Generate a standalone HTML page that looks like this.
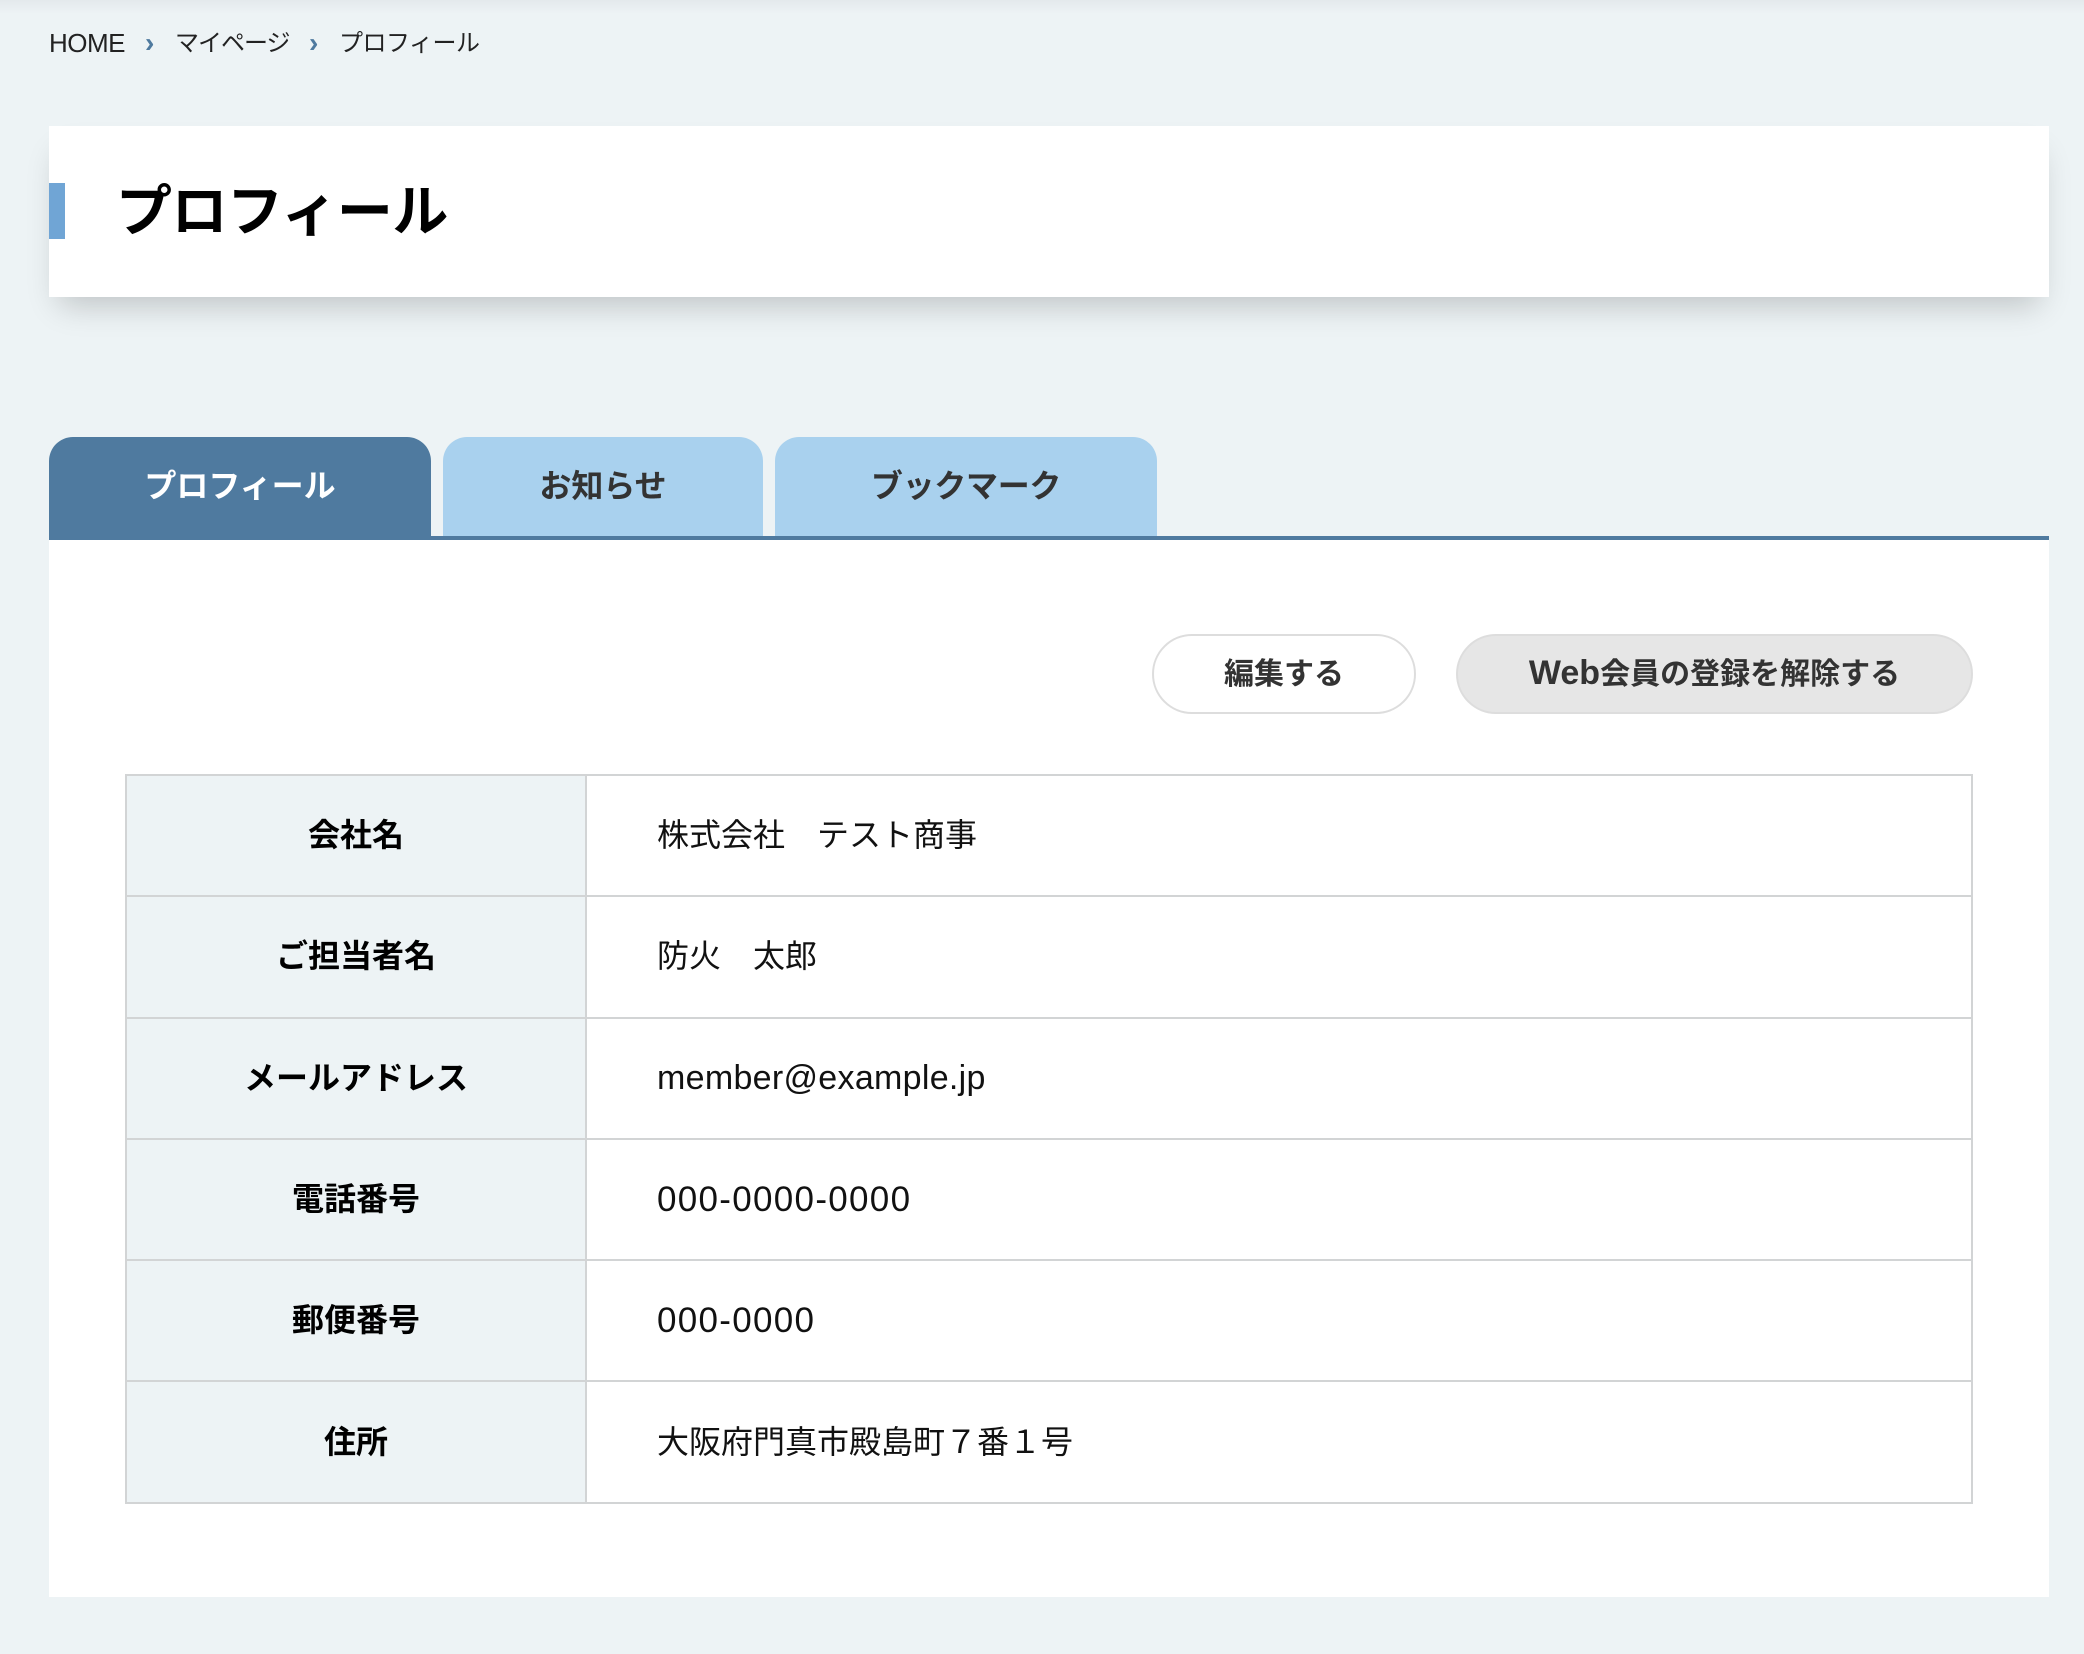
<!DOCTYPE html>
<html lang="ja">
<head>
<meta charset="utf-8">
<title>プロフィール</title>
<style>
html,body{margin:0;padding:0}
body{width:2084px;height:1654px;position:relative;overflow:hidden;background:#edf3f5;font-family:"Liberation Sans","Noto Sans CJK JP",sans-serif;color:#000}
.a{position:absolute;white-space:nowrap}
.topshade{left:0;top:0;width:2084px;height:14px;background:linear-gradient(#e4e9ec,#edf3f5)}
.crumb{top:26px;height:36px;line-height:36px;font-size:24px;color:#222}
.sep{top:26px;height:36px;line-height:34px;font-size:28px;font-weight:700;color:#4f7a9f}
.head{left:49px;top:126px;width:2000px;height:171px;background:#fff;box-shadow:0 18px 30px -10px rgba(0,0,0,.2)}
.bar{left:49px;top:183px;width:16px;height:56px;background:#70a5d5}
.h1{left:116px;top:172px;height:80px;line-height:80px;font-size:56px;font-weight:700;letter-spacing:-.5px}
.tab{top:437px;height:99px;border-radius:24px 24px 0 0;background:#a9d1ee;text-align:center;font-size:32px;font-weight:700;line-height:98px;color:#333}
.panel{left:49px;top:540px;width:2000px;height:1057px;background:#fff}
.line{left:49px;top:536px;width:2000px;height:4px;background:#4f7a9f}
.btn{top:634px;height:80px;box-sizing:border-box;border:2px solid #ddd;border-radius:40px;text-align:center;line-height:78px;font-size:30px;font-weight:700;color:#333}
table{position:absolute;left:125px;top:774px;width:1848px;border-collapse:collapse;table-layout:fixed}
th,td{border:2px solid #d2d4d5;height:119.3px;padding:0;font-size:32px;box-sizing:content-box}
th{width:458px;background:#edf3f5;font-weight:700;text-align:center;color:#000}
td{padding-left:70px;font-weight:400;text-align:left;color:#111}
.j{position:relative;top:-2.5px}
.m{font-size:34px;letter-spacing:.3px}
.n{font-size:35px;letter-spacing:1.3px}
</style>
</head>
<body>
<div class="a topshade"></div>
<div class="a crumb" style="left:49px;top:25px;font-size:26px;letter-spacing:-.5px">HOME</div>
<div class="a sep" style="left:145px">›</div>
<div class="a crumb" style="left:175px;letter-spacing:-1px">マイページ</div>
<div class="a sep" style="left:309px">›</div>
<div class="a crumb" style="left:339px;letter-spacing:-.5px">プロフィール</div>

<div class="a head"></div>
<div class="a bar"></div>
<div class="a h1">プロフィール</div>

<div class="a panel"></div>
<div class="a tab" style="left:443px;width:320px">お知らせ</div>
<div class="a tab" style="left:775px;width:382px;letter-spacing:-.3px">ブックマーク</div>
<div class="a line"></div>
<div class="a tab" style="left:49px;width:382px;height:103px;background:#4f7a9f;color:#fff">プロフィール</div>

<div class="a btn" style="left:1152px;width:264px;background:#fff">編集する</div>
<div class="a btn" style="left:1456px;width:517px;background:#e6e6e6;line-height:75px"><span style="font-size:34px">Web</span>会員の登録を解除する</div>

<table>
<tr><th><span class="j">会社名</span></th><td><span class="j">株式会社　テスト商事</span></td></tr>
<tr><th><span class="j">ご担当者名</span></th><td><span class="j">防火　太郎</span></td></tr>
<tr><th><span class="j">メールアドレス</span></th><td><span class="m">member@example.jp</span></td></tr>
<tr><th><span class="j">電話番号</span></th><td><span class="n">000-0000-0000</span></td></tr>
<tr><th><span class="j">郵便番号</span></th><td><span class="n">000-0000</span></td></tr>
<tr><th><span class="j">住所</span></th><td><span class="j">大阪府門真市殿島町７番１号</span></td></tr>
</table>
</body>
</html>
